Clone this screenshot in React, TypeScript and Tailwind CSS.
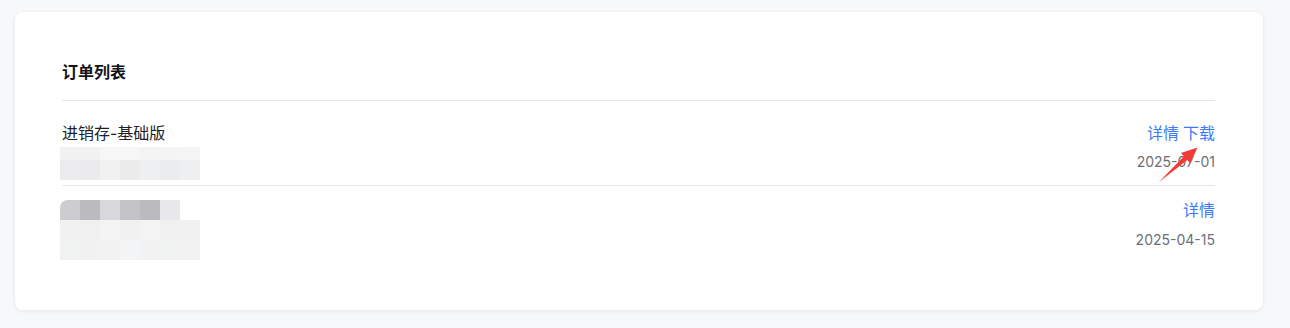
import React from "react";

// Pixelated privacy masks: each row is a list of cell colours (20px cells)
const maskOne = {
  rows: [
    { h: "h-[13px]", cells: ["#f1f1f2", "#f1f1f1", "#f5f6f5", "#f6f6f6", "#f3f3f3", "#f4f4f5", "#f5f5f5"] },
    { h: "h-5", cells: ["#ececee", "#ebebed", "#f1f1f1", "#ebebeb", "#eeeff0", "#ebecee", "#eeeff0"] },
  ],
};

const maskTwo = {
  rows: [
    { h: "h-5", cells: ["#cdcdd1", "#bbbbbf", "#d8d8dc", "#c3c3c7", "#bbbbbf", "#e8e8ec"] },
    { h: "h-5", cells: ["#f1f1f1", "#f0f0f1", "#f3f4f3", "#f0f0f0", "#f3f3f3", "#f0f0f1", "#f1f1f2"] },
    { h: "h-5", cells: ["#f1f2f2", "#f1f1f2", "#f2f2f3", "#f3f4f5", "#f2f2f3", "#f1f2f2", "#f2f2f3"] },
  ],
};

function Mosaic({ mask }: { mask: typeof maskOne }) {
  return (
    <div className="flex flex-col">
      {mask.rows.map((row, i) => (
        <div key={i} className="flex">
          {row.cells.map((c, j) => (
            <div key={j} className={`${row.h} w-5`} style={{ backgroundColor: c }} />
          ))}
        </div>
      ))}
    </div>
  );
}

interface Order {
  name?: string;
  mask: typeof maskOne;
  date: string;
  download: boolean;
}

const orders: Order[] = [
  { name: "进销存-基础版", mask: maskOne, date: "2025-07-01", download: true },
  { mask: maskTwo, date: "2025-04-15", download: false },
];

export default function App() {
  return (
    <div
      className="relative w-[1290px] h-[328px] bg-[#f7f8fa] pt-3 pl-[15px]"
      style={{ fontFamily: 'Inter, "Noto Sans CJK SC", sans-serif' }}
    >
      <div className="w-[1248px] bg-white rounded-lg shadow-[0_1px_4px_rgba(0,0,0,0.08)] pl-[47px] pr-12 pt-12 pb-[50px]">
        {/* Header */}
        <div className="pb-4 border-b border-[#e5e6eb]">
          <h2 className="text-base leading-6 font-bold text-[#111317]">订单列表</h2>
        </div>

        {/* Rows */}
        <div className="flex items-start justify-between pt-5 pb-[5px] border-b border-[#e5e6eb]">
          <div className="flex flex-col">
            <div className="text-base leading-6 text-[#1d2129]">{orders[0].name}</div>
            <div className="mt-[2px] -ml-[2px]">
              <Mosaic mask={orders[0].mask} />
            </div>
          </div>
          <div className="flex flex-col items-end">
            <div className="flex gap-1 text-base leading-6 text-[#3e7bfa]">
              <span>详情</span>
              <span>下载</span>
            </div>
            <div className="mt-[7px] text-sm leading-5 text-[#6b6f78]">{orders[0].date}</div>
          </div>
        </div>

        <div className="flex items-start justify-between pt-3">
          <div className="mt-[2px] -ml-[2px]">
            <div className="rounded-tl-lg overflow-hidden">
              <Mosaic mask={orders[1].mask} />
            </div>
          </div>
          <div className="flex flex-col items-end">
            <div className="text-base leading-6 text-[#3e7bfa]">详情</div>
            <div className="mt-2 text-sm leading-5 text-[#6b6f78]">{orders[1].date}</div>
          </div>
        </div>
      </div>

      {/* Red annotation arrow */}
      <svg className="absolute left-0 top-0 pointer-events-none" width="1290" height="328" viewBox="0 0 1290 328">
        <polygon
          points="1159,182 1183.9,156.3 1180.9,153 1197.5,147.5 1190.3,163.4 1187.3,160.1"
          fill="#f23b36"
        />
      </svg>
    </div>
  );
}
